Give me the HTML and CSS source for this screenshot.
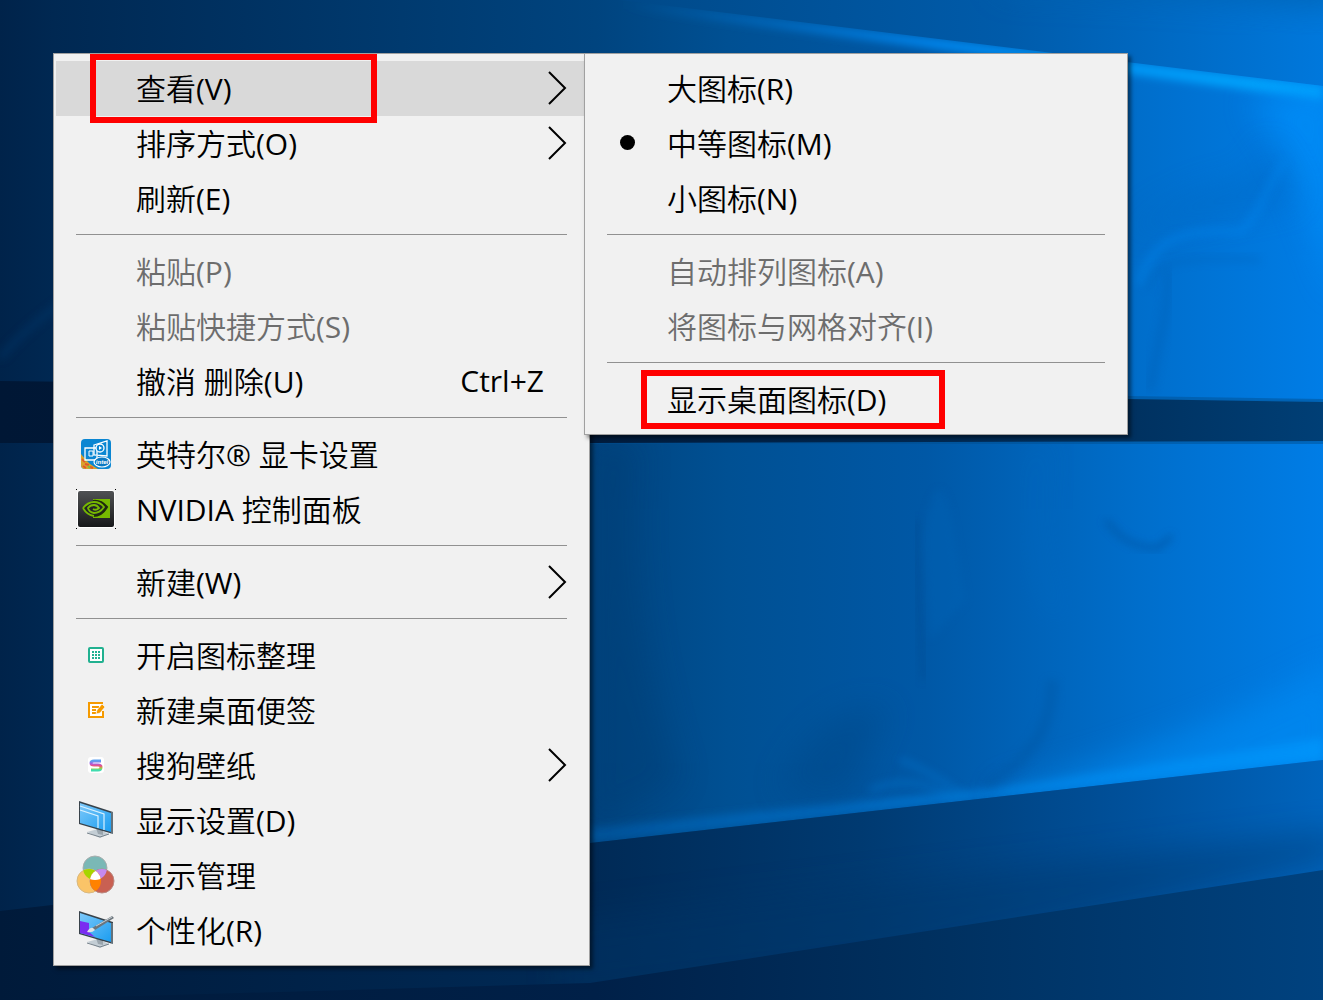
FILE: index.html
```html
<!DOCTYPE html>
<html lang="zh-CN">
<head>
    <meta charset="UTF-8">
    <meta name="viewport" content="width=device-width, initial-scale=1.0">
    <title>桌面</title>
    <link rel="stylesheet" href="styles.css">
</head>
<body>
    <!-- Fondo de escritorio -->
    <svg class="wallpaper" viewBox="0 0 1323 1000" preserveAspectRatio="none" aria-hidden="true">
        <defs>
            <linearGradient id="top" x1="0" x2="1" y1="0" y2="0">
                <stop offset="0" stop-color="#00264f"/>
                <stop offset=".25" stop-color="#003468"/>
                <stop offset=".5" stop-color="#004b8c"/>
                <stop offset=".76" stop-color="#005baa"/>
                <stop offset="1" stop-color="#0078dc"/>
            </linearGradient>
            <linearGradient id="pane" gradientUnits="userSpaceOnUse" x1="0" x2="1323" y1="0" y2="0">
                <stop offset="0" stop-color="#00234a"/>
                <stop offset=".04" stop-color="#002852"/>
                <stop offset=".45" stop-color="#00447f"/>
                <stop offset=".55" stop-color="#005093"/>
                <stop offset=".7" stop-color="#0058a6"/>
                <stop offset=".86" stop-color="#006ecb"/>
                <stop offset="1" stop-color="#007de6"/>
            </linearGradient>
            <linearGradient id="bar" x1="0" x2="1" y1="0" y2="0">
                <stop offset="0" stop-color="#001735"/>
                <stop offset=".45" stop-color="#001c3e"/>
                <stop offset=".86" stop-color="#003261"/>
                <stop offset="1" stop-color="#003f76"/>
            </linearGradient>
            <linearGradient id="floor" x1="0" x2="1" y1="0" y2="0">
                <stop offset="0" stop-color="#001a3a"/>
                <stop offset=".45" stop-color="#002a56"/>
                <stop offset=".65" stop-color="#003a71"/>
                <stop offset=".85" stop-color="#00509a"/>
                <stop offset="1" stop-color="#0064bd"/>
            </linearGradient>
            <linearGradient id="floor2" x1="0" x2="1" y1="0" y2="0">
                <stop offset="0" stop-color="#001a3a"/>
                <stop offset=".45" stop-color="#002048"/>
                <stop offset=".7" stop-color="#00305f"/>
                <stop offset="1" stop-color="#00427f"/>
            </linearGradient>
            <linearGradient id="beam" x1="0" x2="1" y1="0" y2="0">
                <stop offset="0" stop-color="#0078d8" stop-opacity="0"/>
                <stop offset=".45" stop-color="#0088f0"/>
                <stop offset="1" stop-color="#00aaff"/>
            </linearGradient>
            <linearGradient id="edge" x1="0" x2="1" y1="0" y2="0">
                <stop offset="0" stop-color="#0064b8" stop-opacity=".5"/>
                <stop offset=".5" stop-color="#007ad8" stop-opacity=".8"/>
                <stop offset="1" stop-color="#009cff"/>
            </linearGradient>
            <clipPath id="lower"><path d="M0 442H1323V760L590 843L0 911Z"/></clipPath>
            <clipPath id="upper"><path d="M620 0L1323 86V397L0 380V0Z"/></clipPath>
            <filter id="blur4" x="-20%" y="-20%" width="140%" height="140%"><feGaussianBlur stdDeviation="4"/></filter>
            <filter id="blur16" x="-50%" y="-50%" width="200%" height="200%"><feGaussianBlur stdDeviation="16"/></filter>
        </defs>

        <rect width="1323" height="1000" fill="url(#top)"/>
        <path d="M1000 -40H1340V10Q1180 -6 1000 -10Z" fill="#0060ae" opacity=".7" filter="url(#blur16)"/>

        <!-- Panel superior -->
        <path d="M620 0L1323 86V400H0V0Z" fill="url(#pane)"/>
        <g clip-path="url(#upper)">
            <path d="M620 0L1323 86V100L1130 74L620 8Z" fill="url(#beam)" filter="url(#blur4)"/>
            <path d="M1340 80L1250 100Q1290 150 1340 300Z" fill="#0090fa" opacity=".7" filter="url(#blur16)"/>
            <path d="M1120 240Q1180 185 1250 180L1270 140L1300 200L1150 230Z" fill="#0066be" opacity=".4" filter="url(#blur16)"/>
            <path d="M1140 285C1150 240 1180 228 1240 232C1260 215 1265 190 1285 160" fill="none" stroke="#0086ee" stroke-width="8" opacity=".4" filter="url(#blur4)"/>
            <path d="M1148 290C1154 262 1175 256 1260 260" fill="none" stroke="#0062b8" stroke-width="5" opacity=".4" filter="url(#blur4)"/>
            <path d="M1150 390C1158 340 1168 320 1168 270" fill="none" stroke="#005fb4" stroke-width="8" opacity=".4" filter="url(#blur4)"/>
            <path d="M0 358Q24 330 60 304" fill="none" stroke="#003a70" stroke-width="6" opacity=".5" filter="url(#blur4)"/>
        </g>

        <!-- Panel inferior -->
        <path d="M0 440H1323V765L0 915Z" fill="url(#pane)"/>
        <g clip-path="url(#lower)">
            <path d="M590 843L1323 760V738L1000 788L590 828Z" fill="url(#edge)" filter="url(#blur4)"/>
            <path d="M1000 810L1340 770V660Q1200 740 1000 790Z" fill="#008cf4" opacity=".6" filter="url(#blur16)"/>
            <path d="M590 442H640Q620 600 680 780L590 830Z" fill="#003a70" opacity=".35" filter="url(#blur16)"/>
            <path d="M780 790C800 740 840 700 890 710C860 750 870 780 840 800Z" fill="#004582" opacity=".4" filter="url(#blur16)"/>
            <path d="M917 520Q918 620 924 680" fill="none" stroke="#004a8c" stroke-width="5" opacity=".5" filter="url(#blur4)"/>
            <path d="M922 540Q938 450 952 520L966 600L930 640Z" fill="#0064b6" opacity=".4" filter="url(#blur4)"/>
            <path d="M1040 442Q1020 540 1060 620" fill="none" stroke="#0070cc" stroke-width="14" opacity=".3" filter="url(#blur16)"/>
            <path d="M1106 520Q1124 548 1158 548L1172 536" fill="none" stroke="#0058a8" stroke-width="5" opacity=".8" filter="url(#blur4)"/>
            <path d="M1052 680C1052 730 1030 760 985 785" fill="none" stroke="#0054a0" stroke-width="12" opacity=".35" filter="url(#blur4)"/>
            <path d="M870 790Q920 770 960 805M900 760Q930 770 970 800" fill="none" stroke="#0078d4" stroke-width="5" opacity=".5" filter="url(#blur4)"/>
        </g>

        <!-- Travesaño y suelo -->
        <path d="M540 386L1128 396L1323 399V444H540Z" fill="#004f92" opacity=".5"/>
        <path d="M0 381L590 388L1128 399L1323 402V441L590 443H0Z" fill="url(#bar)"/>
        <path d="M0 911L590 843L1323 760V1000H0Z" fill="url(#floor)"/>
        <path d="M1340 860L900 960L560 1000L560 920L1340 830Z" fill="#003567" opacity=".4" filter="url(#blur16)"/>
        <path d="M0 1000L590 983L1323 870V1000Z" fill="url(#floor2)"/>
    </svg>

    <!-- Formas compartidas -->
    <svg class="sprite" aria-hidden="true">
        <symbol id="arrow" viewBox="0 0 20 34">
            <path d="M2 1L18 17L2 33" fill="none" stroke="#000" stroke-width="2"/>
        </symbol>
        <linearGradient id="screen" x1="0" x2="1" y1="0" y2="1">
            <stop offset="0" stop-color="#7cc8fa"/>
            <stop offset="1" stop-color="#1b9df0"/>
        </linearGradient>
        <linearGradient id="dark" x1="0" x2="0" y1="0" y2="1">
            <stop offset="0" stop-color="#505254"/>
            <stop offset="1" stop-color="#17181a"/>
        </linearGradient>
        <linearGradient id="rainbow" x1="0" x2="0" y1="0" y2="1">
            <stop offset="0" stop-color="#5aa0f0"/>
            <stop offset=".3" stop-color="#a95be0"/>
            <stop offset=".55" stop-color="#f0507c"/>
            <stop offset=".8" stop-color="#a8cc40"/>
            <stop offset="1" stop-color="#40dcb0"/>
        </linearGradient>
    </svg>

    <main class="desktop">
        <ul class="menu">
            <li class="item">
                <button class="row active" type="button">
                    <span class="icon"></span>
                    <span class="text">查看(V)</span>
                    <svg class="arrow" aria-hidden="true"><use href="#arrow"/></svg>
                </button>
                <span class="mark mark-view"></span>

                <ul class="menu submenu">
                    <li class="item">
                        <label class="row"><input class="check" type="radio" name="size"><span class="text">大图标(R)</span></label>
                    </li>
                    <li class="item">
                        <label class="row"><input class="check" type="radio" name="size" checked><span class="text">中等图标(M)</span></label>
                    </li>
                    <li class="item">
                        <label class="row"><input class="check" type="radio" name="size"><span class="text">小图标(N)</span></label>
                    </li>
                    <li class="separator"></li>
                    <li class="item">
                        <label class="row disabled"><input class="check" type="checkbox" disabled><span class="text">自动排列图标(A)</span></label>
                    </li>
                    <li class="item">
                        <label class="row disabled"><input class="check" type="checkbox" disabled><span class="text">将图标与网格对齐(I)</span></label>
                    </li>
                    <li class="separator"></li>
                    <li class="item">
                        <label class="row"><input class="check" type="checkbox"><span class="text">显示桌面图标(D)</span></label>
                        <span class="mark mark-icons"></span>
                    </li>
                </ul>
            </li>
            <li class="item">
                <button class="row" type="button">
                    <span class="icon"></span>
                    <span class="text">排序方式(O)</span>
                    <svg class="arrow" aria-hidden="true"><use href="#arrow"/></svg>
                </button>
            </li>
            <li class="item">
                <button class="row" type="button"><span class="icon"></span><span class="text">刷新(E)</span></button>
            </li>
            <li class="separator"></li>
            <li class="item">
                <button class="row disabled" type="button" disabled><span class="icon"></span><span class="text">粘贴(P)</span></button>
            </li>
            <li class="item">
                <button class="row disabled" type="button" disabled><span class="icon"></span><span class="text">粘贴快捷方式(S)</span></button>
            </li>
            <li class="item">
                <button class="row" type="button">
                    <span class="icon"></span>
                    <span class="text">撤消 删除(U)</span>
                    <span class="shortcut">Ctrl+Z</span>
                </button>
            </li>
            <li class="separator"></li>
            <li class="item">
                <button class="row" type="button">
                    <svg class="icon" viewBox="0 0 40 40" aria-hidden="true">
                        <rect x="5" y="5" width="30" height="30" rx="4" fill="#0a86d2"/>
                        <path d="M5 20L10 26L14 30L22 35H9Q5 35 5 31Z" fill="#d9a32c"/>
                        <path d="M6 25l3 3M9 30l4 1M7 32l3 2M14 33l3 1" stroke="#e2572b" stroke-width="2"/>
                        <path d="M8 25l3 2M12 32l2 2" stroke="#7dbb42" stroke-width="2"/>
                        <path d="M18 11L31 7V22L18 21ZM9 14H21V26H9Z" fill="none" stroke="#fff" stroke-width="1.3"/>
                        <path d="M13 17H17V22H13Z" fill="none" stroke="#fff"/>
                        <circle cx="24" cy="14" r="4" fill="#0a86d2" stroke="#fff" stroke-width="1.3"/>
                        <path d="M23 12L26 14L23 16Z" fill="#fff"/>
                        <ellipse cx="26" cy="28" rx="8" ry="5" fill="#0a78c2" stroke="#fff" stroke-width="1.2"/>
                        <text class="intel" x="26" y="30" text-anchor="middle">intel</text>
                    </svg>
                    <span class="text">英特尔® 显卡设置</span>
                </button>
            </li>
            <li class="item">
                <button class="row" type="button">
                    <svg class="icon" viewBox="0 0 40 40" aria-hidden="true">
                        <path d="M0 0h1v1h-1zM39 0h1v1h-1zM0 39h1v1h-1zM39 39h1v1h-1z" fill="#000"/>
                        <rect x="1" y="1" width="38" height="38" rx="3" fill="#fff"/>
                        <rect x="2" y="2" width="36" height="36" rx="2" fill="url(#dark)"/>
                        <path d="M17 10H34V29H17Z" fill="#76b900"/>
                        <path d="M7 19Q12 12 19 12Q26 12 31 19Q26 27 19 27Q12 27 7 19Z" fill="#222426"/>
                        <path d="M17 12Q25 11 31 18Q26 27 17 27" fill="none" stroke="#1e2a0c" stroke-width="2"/>
                        <path d="M7 19Q12 13 18 13Q24 13 28 18Q24 24 18 24Q13 23 12 19Q14 16 18 16Q21 16 23 19Q20 22 17 20M7 19Q11 26 18 27" fill="none" stroke="#76b900" stroke-width="1.8"/>
                    </svg>
                    <span class="text">NVIDIA 控制面板</span>
                </button>
            </li>
            <li class="separator"></li>
            <li class="item">
                <button class="row" type="button">
                    <span class="icon"></span>
                    <span class="text">新建(W)</span>
                    <svg class="arrow" aria-hidden="true"><use href="#arrow"/></svg>
                </button>
            </li>
            <li class="separator"></li>
            <li class="item">
                <button class="row" type="button">
                    <svg class="icon" viewBox="0 0 40 40" aria-hidden="true">
                        <rect x="13" y="13" width="14" height="14" rx="1" fill="#fff" stroke="#21b190" stroke-width="2"/>
                        <path d="M16 17h2m1 0h2m1 0h2M16 20h2m1 0h2m1 0h2M16 23h2m1 0h2m1 0h2" stroke="#21b190" stroke-width="2"/>
                    </svg>
                    <span class="text">开启图标整理</span>
                </button>
            </li>
            <li class="item">
                <button class="row" type="button">
                    <svg class="icon" viewBox="0 0 40 40" aria-hidden="true">
                        <path d="M27 21V27H13V13H27" fill="#fff" stroke="#f59a00" stroke-width="2"/>
                        <path d="M16 17H23M16 20H20M16 23H20" stroke="#f59a00" stroke-width="2"/>
                        <path d="M20 24L21 20L26 14L29 17L24 23Z" fill="#f59a00" stroke="#fff" stroke-width=".6"/>
                    </svg>
                    <span class="text">新建桌面便签</span>
                </button>
            </li>
            <li class="item">
                <button class="row" type="button">
                    <svg class="icon" viewBox="0 0 40 40" aria-hidden="true">
                        <rect x="12" y="12" width="16" height="16" rx="3" fill="#fff"/>
                        <path d="M25 16H18Q15 16 15 18Q15 20 18 20H22Q25 20 25 22Q25 25 22 25H15" fill="none" stroke="url(#rainbow)" stroke-width="3"/>
                    </svg>
                    <span class="text">搜狗壁纸</span>
                    <svg class="arrow" aria-hidden="true"><use href="#arrow"/></svg>
                </button>
            </li>
            <li class="item">
                <button class="row" type="button">
                    <svg class="icon" viewBox="0 0 40 40" aria-hidden="true">
                        <path d="M11 32L22 29L33 34L24 38Z" fill="#c3cdd4"/>
                        <path d="M11 33L24 37L33 34" fill="none" stroke="#77838c"/>
                        <path d="M20 28L27 30V35L22 34Z" fill="#9ba6ae"/>
                        <path d="M3 1L37 12V34L3 24Z" fill="#38424a"/>
                        <path d="M4 3L35 13V32L4 23Z" fill="url(#screen)"/>
                        <path d="M4 6L28 14V30M4 10L22 16V28" fill="none" stroke="#d8f1ff" stroke-width="1.2"/>
                        <path d="M36 12V34" stroke="#8fa0aa"/>
                    </svg>
                    <span class="text">显示设置(D)</span>
                </button>
            </li>
            <li class="item">
                <button class="row" type="button">
                    <svg class="icon" viewBox="0 0 40 40" aria-hidden="true">
                        <clipPath id="teal"><circle cx="19" cy="13" r="12"/></clipPath>
                        <clipPath id="yellow"><circle cx="13" cy="26" r="12"/></clipPath>
                        <clipPath id="both"><circle cx="13" cy="26" r="12" clip-path="url(#teal)"/></clipPath>
                        <circle cx="19" cy="13" r="12" fill="#7ab8b6" stroke="#a9aeae"/>
                        <circle cx="13" cy="26" r="12" fill="#fac468" stroke="#d8b880"/>
                        <circle cx="26" cy="26" r="12" fill="#c96052" stroke="#b98982"/>
                        <circle cx="13" cy="26" r="12" fill="#a7d500" clip-path="url(#teal)"/>
                        <circle cx="26" cy="26" r="12" fill="#c58af0" clip-path="url(#teal)"/>
                        <circle cx="26" cy="26" r="12" fill="#ff8200" clip-path="url(#yellow)"/>
                        <circle cx="26" cy="26" r="12" fill="#fff" clip-path="url(#both)"/>
                    </svg>
                    <span class="text">显示管理</span>
                </button>
            </li>
            <li class="item">
                <button class="row" type="button">
                    <svg class="icon" viewBox="0 0 40 40" aria-hidden="true">
                        <path d="M11 32L22 29L33 34L24 38Z" fill="#c3cdd4"/>
                        <path d="M11 33L24 37L33 34" fill="none" stroke="#77838c"/>
                        <path d="M20 28L27 30V35L22 34Z" fill="#9ba6ae"/>
                        <path d="M3 1L37 12V34L3 24Z" fill="#38424a"/>
                        <path d="M4 3L35 13V32L4 23Z" fill="url(#screen)"/>
                        <path d="M4 11L13 13V22L19 27L4 23Z" fill="#7a2cf0"/>
                        <path d="M16 18L36 6L38 8L19 20Z" fill="#6c757c"/>
                        <path d="M20 16L36 7" stroke="#c7ced3"/>
                        <path d="M11 22Q14 17 17 18L19 20Q16 23 11 22Z" fill="#dfe3e6"/>
                        <path d="M36 13V34" stroke="#8fa0aa"/>
                    </svg>
                    <span class="text">个性化(R)</span>
                </button>
            </li>
        </ul>
    </main>
</body>
</html>
```
FILE: styles.css
```css
* { box-sizing: border-box; }
body { margin: 0; min-height: 100vh; background-color: #00264f; font-family: "Open Sans", "Noto Sans CJK SC DemiLight", "Noto Sans CJK SC", sans-serif; font-size: 30px; color: #000; }
.wallpaper { position: absolute; top: 0; left: 0; width: 100%; height: 100%; z-index: -1; }
.sprite { position: absolute; width: 0; height: 0; }
.desktop { display: flex; align-items: flex-start; padding: 53px 53px 34px; }

.menu { list-style: none; margin: 0; padding: 7px 0; min-width: 537px; background-color: #f1f1f1; border: 1px solid #a0a0a0; box-shadow: 3px 3px 4px rgba(0, 0, 0, 0.5); }
.submenu { position: absolute; top: -8px; left: calc(100% - 5px); min-width: 544px; z-index: 1; }
.item { position: relative; }

.row { display: flex; align-items: center; gap: 20px; width: 100%; height: 55px; padding: 0 22px 2px; border: none; background: none; font: inherit; line-height: 50px; color: inherit; text-align: left; white-space: nowrap; }
.row:hover { background-color: #e5e5e5; }
.row.active { padding-left: 20px; border-left: 2px solid #f1f1f1; background-color: #d9d9d9; }
.row.disabled { color: #6d6d6d; }
.icon { flex: none; width: 40px; height: 40px; }
.intel { font-family: "Liberation Sans", sans-serif; font-size: 6px; font-weight: bold; font-style: italic; fill: #fff; }
.text { flex: 1; padding-top: 2px; }
.shortcut { margin-right: 23px; }
.arrow { flex: none; width: 20px; height: 34px; }

.check { appearance: none; flex: none; display: grid; place-items: center; width: 40px; height: 40px; margin: 0; }
.check:checked::before { content: ""; width: 15px; height: 15px; border-radius: 50%; background-color: #000; }

.separator { height: 1px; margin: 8px 22px 9px; background-color: #919191; }

/* Recuadros rojos */
.mark { position: absolute; border: 6px solid #f00; pointer-events: none; }
.mark-view { top: -7px; left: 36px; width: 287px; height: 69px; }
.mark-icons { top: -2px; left: 56px; width: 304px; height: 59px; }
```
